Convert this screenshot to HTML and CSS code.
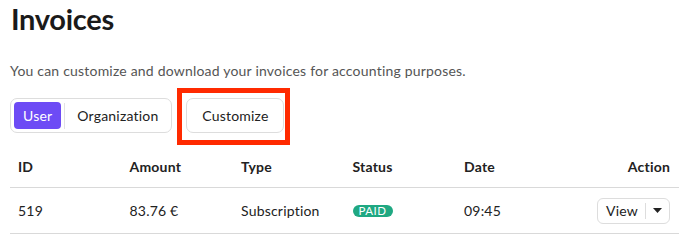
FILE: index.html
```html
<!DOCTYPE html>
<html lang="en">
<head>
<meta charset="utf-8">
<title>Invoices</title>
<link rel="stylesheet" href="styles.css">
</head>
<body>
<main class="page">
  <h1 class="title">Invoices</h1>
  <p class="lead">You can customize and download your invoices for accounting purposes.</p>
  <div class="toolbar">
    <div class="segmented">
      <button class="seg seg-active">User</button>
      <span class="seg-sep"></span>
      <button class="seg">Organization</button>
    </div>
    <div class="highlight">
      <button class="btn">Customize</button>
    </div>
  </div>
  <table class="invoices">
    <thead>
      <tr>
        <th>ID</th>
        <th>Amount</th>
        <th>Type</th>
        <th>Status</th>
        <th>Date</th>
        <th class="right">Action</th>
      </tr>
    </thead>
    <tbody>
      <tr>
        <td>519</td>
        <td>83.76 €</td>
        <td>Subscription</td>
        <td><span class="badge">PAID</span></td>
        <td>09:45</td>
        <td class="right">
          <div class="split">
            <button class="split-main">View</button>
            <span class="split-sep"></span>
            <button class="split-caret" aria-label="More">
              <svg width="9" height="5" viewBox="0 0 9 5"><path d="M0 0h9L4.5 5z" fill="#222"/></svg>
            </button>
          </div>
        </td>
      </tr>
    </tbody>
  </table>
</main>
</body>
</html>
```
FILE: styles.css
```css
* { box-sizing: border-box; }
html, body { margin: 0; padding: 0; background: #fff; }
body {
  font-family: Lato, "Noto Sans", sans-serif;
  color: #222;
  font-size: 14px;
  letter-spacing: 0.2px;
}
.page {
  padding: 1px 12px 0 10px;
}
.title {
  margin: 0;
  font-size: 29px;
  line-height: 36px;
  font-weight: 700;
  color: #1a1a1a;
  letter-spacing: -0.3px;
  padding-left: 1px;
}
.lead {
  margin: 24px 0 0 0;
  font-size: 14px;
  line-height: 20px;
  color: #555;
}
.toolbar {
  margin-top: 17px;
  display: flex;
  align-items: center;
  gap: 14px;
}
.segmented {
  display: flex;
  align-items: center;
  height: 35px;
  padding: 3px;
  border: 1px solid #ddd;
  border-radius: 7px;
  background: #fff;
}
button {
  font-family: inherit;
  font-size: 14px;
  letter-spacing: 0.2px;
  color: #222;
  background: none;
  border: 0;
  padding: 0;
  cursor: pointer;
}
.seg {
  height: 27px;
  padding: 0 10px 0 11px;
  border-radius: 4px;
}
.seg-active {
  background: #6d4bf5;
  color: #fff;
  padding: 0 9px;
}
.seg-sep {
  width: 1px;
  height: 26px;
  background: #e2e2e2;
  margin: 0 1px 0 3px;
}
.highlight {
  position: relative;
}
.highlight::after {
  content: "";
  position: absolute;
  left: -9px;
  right: -6px;
  top: -10px;
  bottom: -12px;
  border: 5px solid #ff2a00;
  pointer-events: none;
}
.btn {
  height: 35px;
  width: 98px;
  border: 1px solid #ddd;
  border-radius: 7px;
  background: #fff;
}
.invoices {
  margin-top: 14px;
  width: 669px;
  border-collapse: collapse;
  table-layout: fixed;
}
.invoices th,
.invoices td {
  text-align: left;
  padding: 10px 8px;
  line-height: 20px;
  border-bottom: 1px solid #d9d9d9;
  vertical-align: middle;
}
.invoices th {
  font-weight: 700;
}
.invoices td {
  height: 46px;
  padding-top: 9px;
  padding-bottom: 9px;
}
.invoices .right {
  text-align: right;
  padding-right: 9px;
}
.badge {
  display: inline-block;
  height: 12px;
  line-height: 12px;
  padding: 0 6px;
  border-radius: 6px;
  background: #1fa882;
  color: #fff;
  font-size: 11.5px;
  letter-spacing: 0.5px;
  vertical-align: 1px;
}
.split {
  display: inline-flex;
  align-items: center;
  height: 26px;
  border: 1px solid #ddd;
  border-radius: 6px;
  vertical-align: top;
}
.split-main {
  padding: 0 7px 0 8px;
  height: 24px;
}
.split-sep {
  width: 1px;
  height: 16px;
  background: #ddd;
}
.split-caret {
  width: 23px;
  height: 24px;
  display: flex;
  align-items: center;
  justify-content: center;
}
```
